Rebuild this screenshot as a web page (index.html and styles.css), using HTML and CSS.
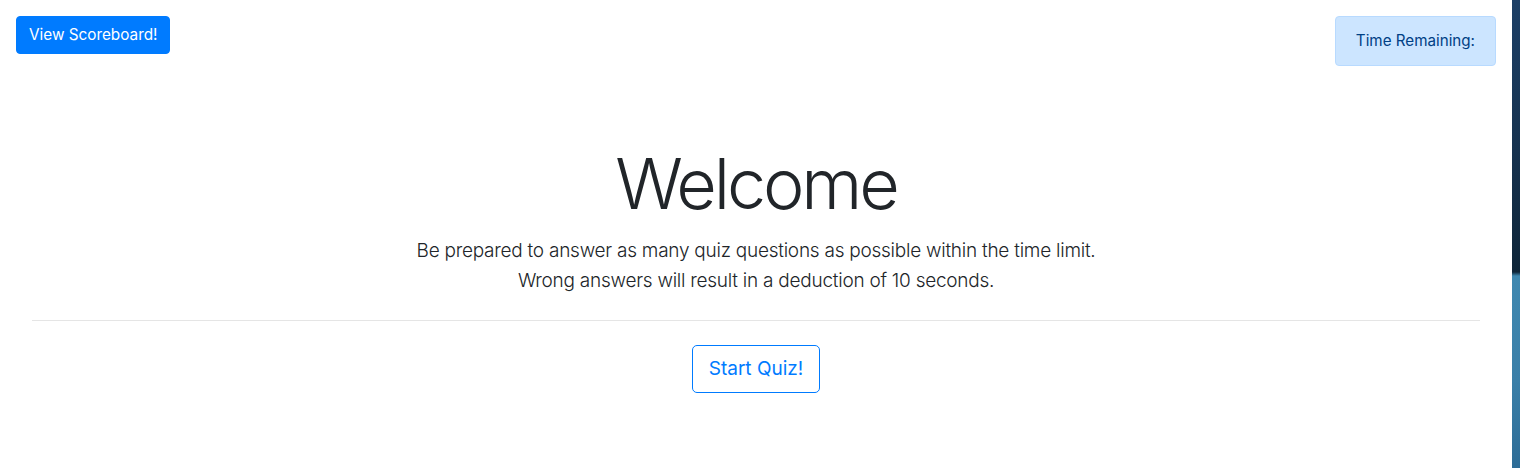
FILE: index.html
```html
<!DOCTYPE html>
<html lang="en">
<head>
<meta charset="utf-8">
<title>Quiz</title>
<link rel="stylesheet" href="styles.css">
</head>
<body>
<div class="page">
  <main class="main">
    <header class="topbar">
      <button class="btn btn-primary">View Scoreboard!</button>
      <div class="alert">Time Remaining:</div>
    </header>
    <section class="intro">
      <h1 class="display">Welcome</h1>
      <p class="lead">Be prepared to answer as many quiz questions as possible within the time limit.<br>Wrong answers will result in a deduction of 10 seconds.</p>
      <hr class="divider">
      <button class="btn btn-outline btn-lg">Start Quiz!</button>
    </section>
  </main>
  <div class="desktop-strip"></div>
</div>
</body>
</html>
```
FILE: styles.css
```css
* { box-sizing: border-box; }
html, body { margin: 0; height: 100%; }
body {
  font-family: Inter, "Noto Sans", sans-serif;
  color: #212529;
  background: #fff;
}
.page {
  display: flex;
  height: 100%;
}
.main {
  flex: 1;
  background: #fff;
}
.desktop-strip {
  width: 8px;
  background: linear-gradient(180deg, #1c3f66 0px, #16324f 150px, #0e2538 272px, #3f88b0 276px, #3a7fa8 380px, #2d6c96 468px);
}
.topbar {
  display: flex;
  justify-content: space-between;
  align-items: flex-start;
  padding: 16px 16px 0 16px;
}
.btn {
  font-family: inherit;
  font-size: 15.3px;
  line-height: 24px;
  padding: 6px 12px;
  border-radius: 4px;
  border: 1px solid transparent;
  cursor: pointer;
}
.btn-primary {
  background: #007bff;
  border-color: #007bff;
  color: #fff;
}
.alert {
  background: #cce5ff;
  border: 1px solid #b8daff;
  color: #004085;
  border-radius: 4px;
  padding: 12px 20px;
  font-size: 15.2px;
  line-height: 24px;
}
.intro {
  text-align: center;
  padding: 76px 32px 0;
}
.display {
  font-size: 70px;
  font-weight: 300;
  line-height: 84px;
  margin: 0 0 10px;
  letter-spacing: -3.1px;
}
.lead {
  font-size: 19px;
  font-weight: 300;
  line-height: 30px;
  margin: 0;
  letter-spacing: -0.25px;
}
.divider {
  border: 0;
  border-top: 1px solid rgba(0,0,0,.1);
  margin: 24px 0;
}
.btn-outline {
  background: #fff;
  border-color: #007bff;
  color: #007bff;
}
.btn-lg {
  font-size: 19px;
  line-height: 30px;
  padding: 8px 16px;
  border-radius: 5px;
}
```
